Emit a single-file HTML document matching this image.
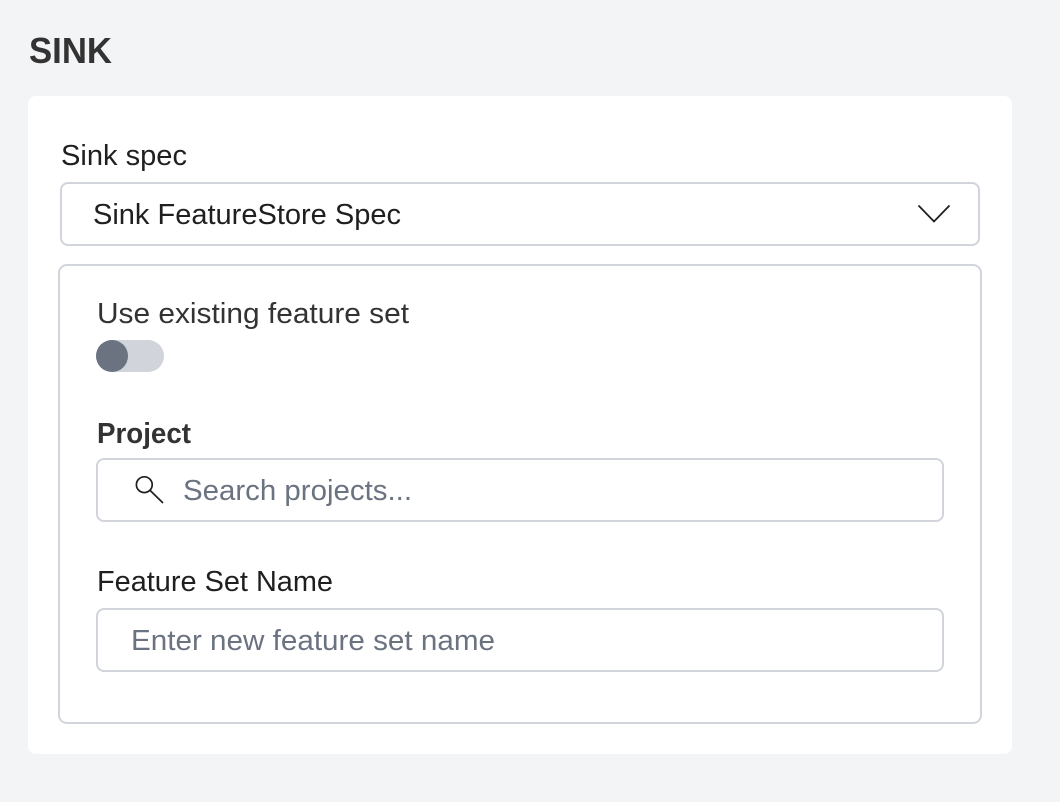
<!DOCTYPE html>
<html lang="en">
<head>
<meta charset="utf-8">
<title>Sink</title>
<style>
html,body{margin:0;padding:0;background:#f3f4f6;}
body{width:1060px;height:802px;overflow:hidden;position:relative;font-family:"Liberation Sans",sans-serif;}
svg{position:absolute;left:0;top:0;display:block;}
text{font-family:"Liberation Sans",sans-serif;font-size:29px;}
</style>
</head>
<body>
<svg width="1060" height="802" viewBox="0 0 1060 802" xmlns="http://www.w3.org/2000/svg">
  <rect x="0" y="0" width="1060" height="802" fill="#f3f4f6"/>
  <text x="29" y="63" style="font-size:36px" font-weight="700" fill="#333333" textLength="83" lengthAdjust="spacingAndGlyphs">SINK</text>

  <rect x="28" y="96" width="984" height="658" rx="8" fill="#ffffff"/>

  <text x="61" y="165" fill="#1f1f1f" textLength="126" lengthAdjust="spacingAndGlyphs">Sink spec</text>
  <rect x="61" y="183" width="918" height="62" rx="7" fill="#ffffff" stroke="#d1d5db" stroke-width="2"/>
  <text x="93" y="224" fill="#1f1f1f" textLength="308" lengthAdjust="spacingAndGlyphs">Sink FeatureStore Spec</text>
  <path d="M918.500 205.500 L934 221.500 L949.500 205.500" fill="none" stroke="#1f1f1f" stroke-width="1.800"/>

  <rect x="59" y="265" width="922" height="458" rx="8" fill="#ffffff" stroke="#d1d5db" stroke-width="2"/>

  <text x="97" y="323" fill="#333333" textLength="312" lengthAdjust="spacingAndGlyphs">Use existing feature set</text>
  <rect x="96" y="340" width="68" height="32" rx="16" fill="#d1d5db"/>
  <circle cx="112" cy="356" r="16" fill="#6b7280"/>

  <text x="97" y="443" font-weight="700" fill="#333333" textLength="94" lengthAdjust="spacingAndGlyphs">Project</text>
  <rect x="97" y="459" width="846" height="62" rx="7" fill="#ffffff" stroke="#d1d5db" stroke-width="2"/>
  <circle cx="144.300" cy="484.700" r="7.900" fill="none" stroke="#1f1f1f" stroke-width="1.700"/>
  <path d="M150.200 490.500 L163 503" fill="none" stroke="#1f1f1f" stroke-width="1.700"/>
  <text x="183" y="500" fill="#6b7280" textLength="229" lengthAdjust="spacingAndGlyphs">Search projects...</text>

  <text x="97" y="591" fill="#1f1f1f" textLength="236" lengthAdjust="spacingAndGlyphs">Feature Set Name</text>
  <rect x="97" y="609" width="846" height="62" rx="7" fill="#ffffff" stroke="#d1d5db" stroke-width="2"/>
  <text x="131" y="650" fill="#6b7280" textLength="364" lengthAdjust="spacingAndGlyphs">Enter new feature set name</text>
</svg>
</body>
</html>
